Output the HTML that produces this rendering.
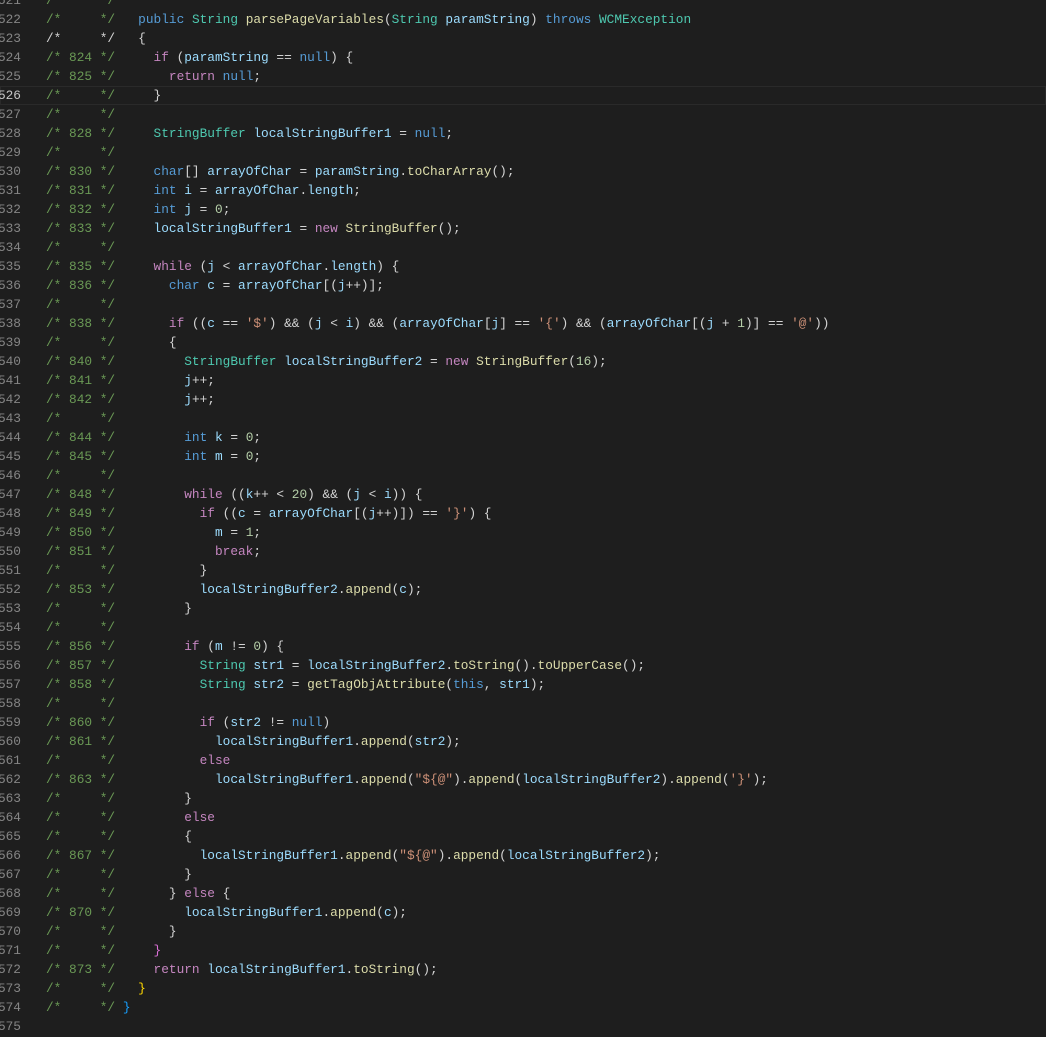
<!DOCTYPE html>
<html><head><meta charset="utf-8">
<style>
html,body{margin:0;padding:0;background:#1e1e1e;width:1046px;height:1037px;overflow:hidden}
#w{position:absolute;left:0;top:-9px;width:1046px;font-family:"Liberation Mono",monospace;font-size:12.8px;line-height:19px;color:#d4d4d4}
.l{position:relative;height:19px;white-space:pre}
.g{position:absolute;right:1025px;color:#858585;text-align:right}
.cur .g{color:#c6c6c6}
.cur{box-shadow:inset 0 0 0 1px #2a2a2a}
.x{position:absolute;left:46px}
.cm{color:#6a9955}.k{color:#569cd6}.c{color:#c586c0}.t{color:#4ec9b0}.f{color:#dcdcaa}.v{color:#9cdcfe}.s{color:#ce9178}.n{color:#b5cea8}
.b1{color:#ffd700}.b2{color:#da70d6}.b3{color:#179fff}
</style></head><body><div id="w">
<div class="l"><span class="g">521</span><span class="x"><span class="cm">/*     */</span></span></div>
<div class="l"><span class="g">522</span><span class="x"><span class="cm">/*     */</span>   <span class="k">public</span> <span class="t">String</span> <span class="f">parsePageVariables</span>(<span class="t">String</span> <span class="v">paramString</span>) <span class="k">throws</span> <span class="t">WCMException</span></span></div>
<div class="l"><span class="g">523</span><span class="x">/*     */   {</span></div>
<div class="l"><span class="g">524</span><span class="x"><span class="cm">/* 824 */</span>     <span class="c">if</span> (<span class="v">paramString</span> == <span class="k">null</span>) {</span></div>
<div class="l"><span class="g">525</span><span class="x"><span class="cm">/* 825 */</span>       <span class="c">return</span> <span class="k">null</span>;</span></div>
<div class="l cur" style="margin-left:0"><span class="g">526</span><span class="x"><span class="cm">/*     */</span>     }</span></div>
<div class="l"><span class="g">527</span><span class="x"><span class="cm">/*     */</span></span></div>
<div class="l"><span class="g">528</span><span class="x"><span class="cm">/* 828 */</span>     <span class="t">StringBuffer</span> <span class="v">localStringBuffer1</span> = <span class="k">null</span>;</span></div>
<div class="l"><span class="g">529</span><span class="x"><span class="cm">/*     */</span></span></div>
<div class="l"><span class="g">530</span><span class="x"><span class="cm">/* 830 */</span>     <span class="k">char</span>[] <span class="v">arrayOfChar</span> = <span class="v">paramString</span>.<span class="f">toCharArray</span>();</span></div>
<div class="l"><span class="g">531</span><span class="x"><span class="cm">/* 831 */</span>     <span class="k">int</span> <span class="v">i</span> = <span class="v">arrayOfChar</span>.<span class="v">length</span>;</span></div>
<div class="l"><span class="g">532</span><span class="x"><span class="cm">/* 832 */</span>     <span class="k">int</span> <span class="v">j</span> = <span class="n">0</span>;</span></div>
<div class="l"><span class="g">533</span><span class="x"><span class="cm">/* 833 */</span>     <span class="v">localStringBuffer1</span> = <span class="c">new</span> <span class="f">StringBuffer</span>();</span></div>
<div class="l"><span class="g">534</span><span class="x"><span class="cm">/*     */</span></span></div>
<div class="l"><span class="g">535</span><span class="x"><span class="cm">/* 835 */</span>     <span class="c">while</span> (<span class="v">j</span> &lt; <span class="v">arrayOfChar</span>.<span class="v">length</span>) {</span></div>
<div class="l"><span class="g">536</span><span class="x"><span class="cm">/* 836 */</span>       <span class="k">char</span> <span class="v">c</span> = <span class="v">arrayOfChar</span>[(<span class="v">j</span>++)];</span></div>
<div class="l"><span class="g">537</span><span class="x"><span class="cm">/*     */</span></span></div>
<div class="l"><span class="g">538</span><span class="x"><span class="cm">/* 838 */</span>       <span class="c">if</span> ((<span class="v">c</span> == <span class="s">'$'</span>) &amp;&amp; (<span class="v">j</span> &lt; <span class="v">i</span>) &amp;&amp; (<span class="v">arrayOfChar</span>[<span class="v">j</span>] == <span class="s">'{'</span>) &amp;&amp; (<span class="v">arrayOfChar</span>[(<span class="v">j</span> + <span class="n">1</span>)] == <span class="s">'@'</span>))</span></div>
<div class="l"><span class="g">539</span><span class="x"><span class="cm">/*     */</span>       {</span></div>
<div class="l"><span class="g">540</span><span class="x"><span class="cm">/* 840 */</span>         <span class="t">StringBuffer</span> <span class="v">localStringBuffer2</span> = <span class="c">new</span> <span class="f">StringBuffer</span>(<span class="n">16</span>);</span></div>
<div class="l"><span class="g">541</span><span class="x"><span class="cm">/* 841 */</span>         <span class="v">j</span>++;</span></div>
<div class="l"><span class="g">542</span><span class="x"><span class="cm">/* 842 */</span>         <span class="v">j</span>++;</span></div>
<div class="l"><span class="g">543</span><span class="x"><span class="cm">/*     */</span></span></div>
<div class="l"><span class="g">544</span><span class="x"><span class="cm">/* 844 */</span>         <span class="k">int</span> <span class="v">k</span> = <span class="n">0</span>;</span></div>
<div class="l"><span class="g">545</span><span class="x"><span class="cm">/* 845 */</span>         <span class="k">int</span> <span class="v">m</span> = <span class="n">0</span>;</span></div>
<div class="l"><span class="g">546</span><span class="x"><span class="cm">/*     */</span></span></div>
<div class="l"><span class="g">547</span><span class="x"><span class="cm">/* 848 */</span>         <span class="c">while</span> ((<span class="v">k</span>++ &lt; <span class="n">20</span>) &amp;&amp; (<span class="v">j</span> &lt; <span class="v">i</span>)) {</span></div>
<div class="l"><span class="g">548</span><span class="x"><span class="cm">/* 849 */</span>           <span class="c">if</span> ((<span class="v">c</span> = <span class="v">arrayOfChar</span>[(<span class="v">j</span>++)]) == <span class="s">'}'</span>) {</span></div>
<div class="l"><span class="g">549</span><span class="x"><span class="cm">/* 850 */</span>             <span class="v">m</span> = <span class="n">1</span>;</span></div>
<div class="l"><span class="g">550</span><span class="x"><span class="cm">/* 851 */</span>             <span class="c">break</span>;</span></div>
<div class="l"><span class="g">551</span><span class="x"><span class="cm">/*     */</span>           }</span></div>
<div class="l"><span class="g">552</span><span class="x"><span class="cm">/* 853 */</span>           <span class="v">localStringBuffer2</span>.<span class="f">append</span>(<span class="v">c</span>);</span></div>
<div class="l"><span class="g">553</span><span class="x"><span class="cm">/*     */</span>         }</span></div>
<div class="l"><span class="g">554</span><span class="x"><span class="cm">/*     */</span></span></div>
<div class="l"><span class="g">555</span><span class="x"><span class="cm">/* 856 */</span>         <span class="c">if</span> (<span class="v">m</span> != <span class="n">0</span>) {</span></div>
<div class="l"><span class="g">556</span><span class="x"><span class="cm">/* 857 */</span>           <span class="t">String</span> <span class="v">str1</span> = <span class="v">localStringBuffer2</span>.<span class="f">toString</span>().<span class="f">toUpperCase</span>();</span></div>
<div class="l"><span class="g">557</span><span class="x"><span class="cm">/* 858 */</span>           <span class="t">String</span> <span class="v">str2</span> = <span class="f">getTagObjAttribute</span>(<span class="k">this</span>, <span class="v">str1</span>);</span></div>
<div class="l"><span class="g">558</span><span class="x"><span class="cm">/*     */</span></span></div>
<div class="l"><span class="g">559</span><span class="x"><span class="cm">/* 860 */</span>           <span class="c">if</span> (<span class="v">str2</span> != <span class="k">null</span>)</span></div>
<div class="l"><span class="g">560</span><span class="x"><span class="cm">/* 861 */</span>             <span class="v">localStringBuffer1</span>.<span class="f">append</span>(<span class="v">str2</span>);</span></div>
<div class="l"><span class="g">561</span><span class="x"><span class="cm">/*     */</span>           <span class="c">else</span></span></div>
<div class="l"><span class="g">562</span><span class="x"><span class="cm">/* 863 */</span>             <span class="v">localStringBuffer1</span>.<span class="f">append</span>(<span class="s">"${@"</span>).<span class="f">append</span>(<span class="v">localStringBuffer2</span>).<span class="f">append</span>(<span class="s">'}'</span>);</span></div>
<div class="l"><span class="g">563</span><span class="x"><span class="cm">/*     */</span>         }</span></div>
<div class="l"><span class="g">564</span><span class="x"><span class="cm">/*     */</span>         <span class="c">else</span></span></div>
<div class="l"><span class="g">565</span><span class="x"><span class="cm">/*     */</span>         {</span></div>
<div class="l"><span class="g">566</span><span class="x"><span class="cm">/* 867 */</span>           <span class="v">localStringBuffer1</span>.<span class="f">append</span>(<span class="s">"${@"</span>).<span class="f">append</span>(<span class="v">localStringBuffer2</span>);</span></div>
<div class="l"><span class="g">567</span><span class="x"><span class="cm">/*     */</span>         }</span></div>
<div class="l"><span class="g">568</span><span class="x"><span class="cm">/*     */</span>       } <span class="c">else</span> {</span></div>
<div class="l"><span class="g">569</span><span class="x"><span class="cm">/* 870 */</span>         <span class="v">localStringBuffer1</span>.<span class="f">append</span>(<span class="v">c</span>);</span></div>
<div class="l"><span class="g">570</span><span class="x"><span class="cm">/*     */</span>       }</span></div>
<div class="l"><span class="g">571</span><span class="x"><span class="cm">/*     */</span>     <span class="b2">}</span></span></div>
<div class="l"><span class="g">572</span><span class="x"><span class="cm">/* 873 */</span>     <span class="c">return</span> <span class="v">localStringBuffer1</span>.<span class="f">toString</span>();</span></div>
<div class="l"><span class="g">573</span><span class="x"><span class="cm">/*     */</span>   <span class="b1">}</span></span></div>
<div class="l"><span class="g">574</span><span class="x"><span class="cm">/*     */</span> <span class="b3">}</span></span></div>
<div class="l"><span class="g">575</span></div>
</div></body></html>
